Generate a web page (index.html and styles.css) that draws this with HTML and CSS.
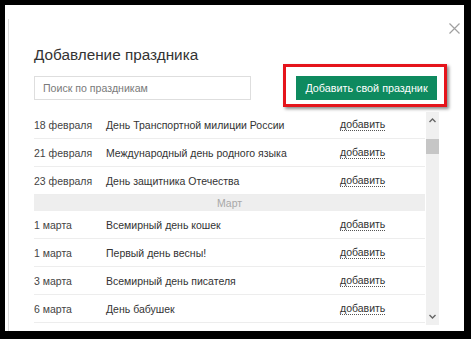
FILE: index.html
```html
<!DOCTYPE html>
<html lang="ru">

<head>
    <meta charset="UTF-8">
    <meta name="viewport" content="width=device-width, initial-scale=1.0">
    <title>Добавление праздника</title>
    <link rel="stylesheet" href="styles.css">
</head>

<body>
    <div class="sheet">
        <span class="close">
            <svg width="11" height="11" viewBox="0 0 11 11"><path d="M0.5 0.5 L10.5 10.5 M10.5 0.5 L0.5 10.5" stroke="#a0a0a0" stroke-width="1.2" fill="none"/></svg>
        </span>

        <div class="dialog">
            <h1 class="title">Добавление праздника</h1>

            <div class="toolbar">
                <input type="text" class="search" placeholder="Поиск по праздникам">
                <span class="marked">
                    <button class="btn-green">Добавить свой праздник</button>
                </span>
            </div>

            <div class="list-wrap">
                <div class="list">
                    <div class="row"><span class="date">18 февраля</span><span class="name">День Транспортной милиции России</span><span class="add">добавить</span></div>
                    <div class="row"><span class="date">21 февраля</span><span class="name">Международный день родного языка</span><span class="add">добавить</span></div>
                    <div class="row"><span class="date">23 февраля</span><span class="name">День защитника Отечества</span><span class="add">добавить</span></div>
                    <div class="month">Март</div>
                    <div class="row"><span class="date">1 марта</span><span class="name">Всемирный день кошек</span><span class="add">добавить</span></div>
                    <div class="row"><span class="date">1 марта</span><span class="name">Первый день весны!</span><span class="add">добавить</span></div>
                    <div class="row"><span class="date">3 марта</span><span class="name">Всемирный день писателя</span><span class="add">добавить</span></div>
                    <div class="row"><span class="date">6 марта</span><span class="name">День бабушек</span><span class="add">добавить</span></div>
                </div>

                <div class="scrollbar">
                    <svg class="arrow" width="7" height="5" viewBox="0 0 7 5"><path d="M0.5 4 L3.5 1 L6.5 4" stroke="#666" stroke-width="1.4" fill="none"/></svg>
                    <span class="thumb"></span>
                    <span class="spacer"></span>
                    <svg class="arrow" width="7" height="5" viewBox="0 0 7 5"><path d="M0.5 1 L3.5 4 L6.5 1" stroke="#666" stroke-width="1.4" fill="none"/></svg>
                </div>
            </div>
        </div>
    </div>
</body>

</html>
```

FILE: styles.css
```css
* {
    box-sizing: border-box;
}

body {
    margin: 0;
    width: 471px;
    height: 339px;
    padding: 5px 7px 8px 5px;
    background-color: #000;
    font-family: "Liberation Sans", Arial, sans-serif;
    color: #333;
}

.sheet {
    position: relative;
    height: 326px;
    padding-top: 14px;
    background-color: #fff;
}

.close {
    position: absolute;
    top: 18px;
    right: 4px;
    width: 11px;
    height: 11px;
    line-height: 0;
}

.dialog {
    height: 312px;
    margin-left: 3px;
    padding: 27px 25px 0 25px;
    border-left: 1px solid #dcdcdc;
}

.title {
    margin: 0;
    font-size: 15.3px;
    line-height: 18px;
    font-weight: normal;
    color: #333;
}

.toolbar {
    display: flex;
    align-items: center;
    margin-top: 12px;
    height: 24px;
}

.search {
    width: 217px;
    height: 24px;
    padding: 0 8px;
    font-family: inherit;
    font-size: 10.6px;
    border: 1px solid #dedede;
    outline: none;
}

.search::placeholder {
    color: #7a7a7a;
}

.marked {
    position: relative;
    margin-left: auto;
    margin-right: 2px;
}

/* red annotation frame round the button */
.marked::after {
    content: "";
    position: absolute;
    top: -12px;
    right: -10px;
    bottom: -7px;
    left: -13px;
    border: 3px solid #e5141c;
    box-shadow: 2px 2px 3px rgba(0, 0, 0, 0.45);
    pointer-events: none;
}

.btn-green {
    display: block;
    width: 141px;
    height: 24px;
    padding: 0;
    font-family: inherit;
    font-size: 10.8px;
    color: #fff;
    background-color: #0e8a5f;
    border: none;
    cursor: pointer;
}

.list-wrap {
    display: flex;
    gap: 1px;
    margin-top: 11px;
    height: 214px;
}

.list {
    flex: 1;
    overflow: hidden;
}

.row {
    display: grid;
    grid-template-columns: 72px 234px auto;
    align-items: center;
    height: 28px;
    font-size: 10.5px;
    border-bottom: 1px solid #ededed;
}

.date {
    color: #444;
}

.add {
    justify-self: start;
    line-height: 12px;
    border-bottom: 1px dotted #555;
}

.month {
    height: 16px;
    line-height: 16px;
    font-size: 10.5px;
    text-align: center;
    color: #a8a8a8;
    background-color: #eeeeee;
}

.scrollbar {
    display: flex;
    flex-direction: column;
    align-items: center;
    width: 13px;
    margin-top: 1px;
    padding: 6px 0;
    background-color: #f0f0f0;
}

.thumb {
    align-self: stretch;
    height: 15px;
    margin-top: 16px;
    background-color: #c6c6c6;
}

.spacer {
    flex: 1;
}
```
